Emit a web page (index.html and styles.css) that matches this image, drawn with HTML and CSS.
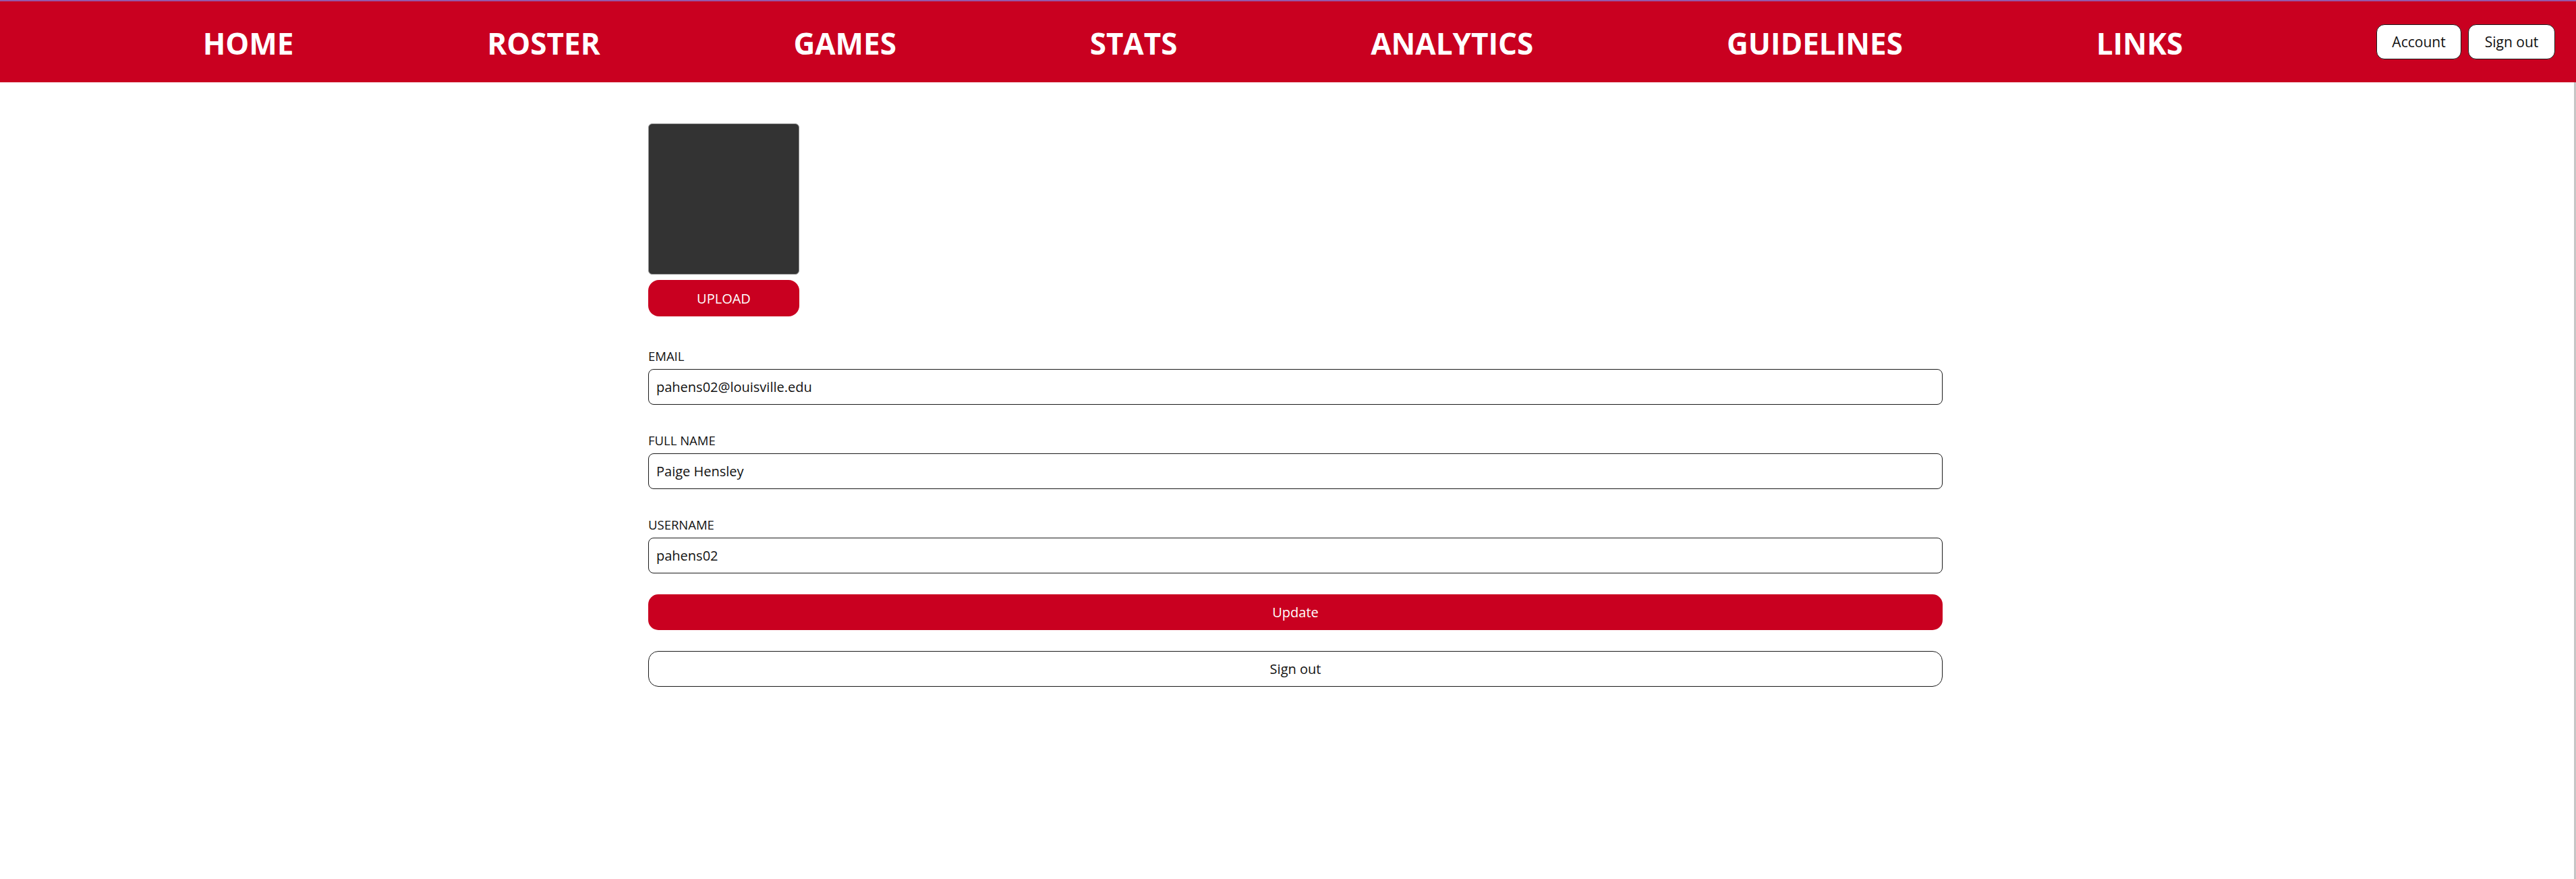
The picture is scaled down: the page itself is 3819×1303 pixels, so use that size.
FILE: index.html
```html
<!DOCTYPE html>
<html lang="en">
<head>
<meta charset="utf-8">
<title>Account</title>
<link rel="stylesheet" href="styles.css">
</head>
<body>
<header class="topbar">
  <ul class="nav-links">
    <li><a class="nav-link" href="#">HOME</a></li>
    <li><a class="nav-link" href="#">ROSTER</a></li>
    <li><a class="nav-link" href="#">GAMES</a></li>
    <li><a class="nav-link" href="#">STATS</a></li>
    <li><a class="nav-link" href="#">ANALYTICS</a></li>
    <li><a class="nav-link" href="#">GUIDELINES</a></li>
    <li><a class="nav-link" href="#">LINKS</a></li>
  </ul>
  <div class="nav-actions">
    <button class="pill-btn" type="button">Account</button>
    <button class="pill-btn" type="button">Sign out</button>
  </div>
</header>
<main class="page">
  <form class="account-form">
    <div class="avatar"></div>
    <button class="upload-btn" type="button">UPLOAD</button>
    <div class="field field-first">
      <label class="field-label" for="email">EMAIL</label>
      <input class="field-input" id="email" type="text" value="pahens02@louisville.edu">
    </div>
    <div class="field">
      <label class="field-label" for="fullname">FULL NAME</label>
      <input class="field-input" id="fullname" type="text" value="Paige Hensley">
    </div>
    <div class="field">
      <label class="field-label" for="username">USERNAME</label>
      <input class="field-input" id="username" type="text" value="pahens02">
    </div>
    <button class="wide-btn wide-btn-primary" type="button">Update</button>
    <button class="wide-btn wide-btn-outline" type="button">Sign out</button>
  </form>
</main>
</body>
</html>
```
FILE: styles.css
```css
* {
  box-sizing: border-box;
}

html, body {
  margin: 0;
  padding: 0;
  background: #ffffff;
  font-family: "Open Sans", "Noto Sans", sans-serif;
  color: #111111;
}

.topbar {
  display: flex;
  align-items: center;
  height: 122px;
  background: #c90020;
  border-top: 2px solid #9657a8;
}

.nav-links {
  flex: 1;
  display: flex;
  justify-content: space-evenly;
  align-items: center;
  list-style: none;
  margin: 0;
  padding: 0 0 0 14px;
}

.nav-link {
  color: #ffffff;
  text-decoration: none;
  font-weight: 700;
  font-size: 44px;
  line-height: 60px;
  display: block;
  padding-top: 4px;
}

.nav-actions {
  display: flex;
  gap: 10px;
  padding-right: 31px;
}

.pill-btn {
  height: 52px;
  background: #ffffff;
  border: 1px solid #1a1a1a;
  border-radius: 12px;
  font-family: "Open Sans", "Noto Sans", sans-serif;
  font-size: 21px;
  color: #111111;
  padding: 0 22px;
}

.pill-btn:first-child {
  width: 126px;
}

.pill-btn:last-child {
  width: 129px;
}

.page {
  min-height: calc(100vh - 122px);
  padding: 61px 0 40px 961px;
  border-right: 3px solid #c6c6c6;
}

.account-form {
  width: 1919px;
  display: flex;
  flex-direction: column;
  align-items: flex-start;
}

.avatar {
  width: 224px;
  height: 224px;
  background: #333333;
  border: 1px solid #8f8f8f;
  border-radius: 6px;
}

.upload-btn {
  margin-top: 8px;
  width: 224px;
  height: 54px;
  background: #c90020;
  color: #ffffff;
  border: none;
  border-radius: 16px;
  font-family: "Open Sans", "Noto Sans", sans-serif;
  font-size: 20px;
}

.field {
  width: 100%;
  margin-top: 41px;
  display: flex;
  flex-direction: column;
  gap: 7px;
}

.field-first {
  margin-top: 47px;
}

.field-label {
  font-size: 18.5px;
  line-height: 24px;
  color: #111111;
}

.field-input {
  width: 100%;
  height: 53px;
  border: 1px solid #1a1a1a;
  border-radius: 8px;
  padding: 0 11px;
  font-family: "Open Sans", "Noto Sans", sans-serif;
  font-size: 20px;
  color: #111111;
  background: #ffffff;
}

.wide-btn {
  width: 100%;
  height: 53px;
  margin-top: 31px;
  border-radius: 15px;
  font-family: "Open Sans", "Noto Sans", sans-serif;
  font-size: 20px;
}

.wide-btn-primary {
  background: #c90020;
  color: #ffffff;
  border: none;
}

.wide-btn-outline {
  background: #ffffff;
  color: #111111;
  border: 1px solid #1a1a1a;
}
```
